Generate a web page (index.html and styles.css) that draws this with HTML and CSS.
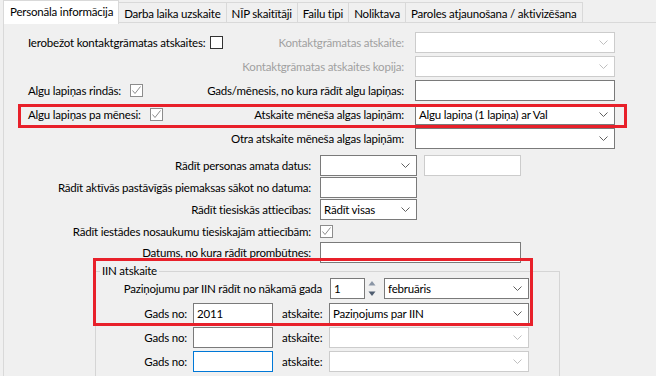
FILE: index.html
```html
<!DOCTYPE html>
<html>
<head>
    <meta charset="utf-8" />
    <title>Personāla informācija</title>
    <link rel="stylesheet" href="styles.css">
</head>
<body>
<div class="tabs">
    <div class="tab active">Personāla informācija</div>
    <div class="tab">Darba laika uzskaite</div>
    <div class="tab">NĪP skaitītāji</div>
    <div class="tab">Failu tipi</div>
    <div class="tab">Noliktava</div>
    <div class="tab">Paroles atjaunošana / aktivizēšana</div>
</div>
<div class="panel">
    <div class="sec-top">
        <div class="frow">
            <span class="chkline">Ierobežot kontaktgrāmatas atskaites:<span class="cb cb-near"></span></span>
            <span class="lbl dis">Kontaktgrāmatas atskaite:</span>
            <span class="box combo dis w200"><span></span><svg class="chev" width="9" height="5" viewBox="0 0 9 5"><path d="M0.5 0.5 4.5 4.5 8.5 0.5"/></svg></span>
        </div>
        <div class="frow">
            <span class="lbl dis">Kontaktgrāmatas atskaites kopija:</span>
            <span class="box combo dis w200"><span></span><svg class="chev" width="9" height="5" viewBox="0 0 9 5"><path d="M0.5 0.5 4.5 4.5 8.5 0.5"/></svg></span>
        </div>
        <div class="frow">
            <span class="chkline">Algu lapiņas rindās:<span class="cb on"><svg width="11" height="11" viewBox="0 0 11 11"><path d="M1.5 5.5 4 8.5 9.5 1.5"/></svg></span></span>
            <span class="lbl">Gads/mēnesis, no kura rādīt algu lapiņas:</span>
            <span class="box w200"></span>
        </div>
        <div class="frow">
            <span class="chkline">Algu lapiņas pa mēnesi:<span class="cb on"><svg width="11" height="11" viewBox="0 0 11 11"><path d="M1.5 5.5 4 8.5 9.5 1.5"/></svg></span></span>
            <span class="lbl">Atskaite mēneša algas lapiņām:</span>
            <span class="box combo w200"><span>Algu lapiņa (1 lapiņa) ar Val</span><svg class="chev" width="9" height="5" viewBox="0 0 9 5"><path d="M0.5 0.5 4.5 4.5 8.5 0.5"/></svg></span>
        </div>
        <div class="frow">
            <span class="lbl">Otra atskaite mēneša algas lapiņām:</span>
            <span class="box combo w200"><span></span><svg class="chev" width="9" height="5" viewBox="0 0 9 5"><path d="M0.5 0.5 4.5 4.5 8.5 0.5"/></svg></span>
        </div>
    </div>

    <div class="sec-mid">
        <span class="mlbl">Rādīt personas amata datus:</span>
        <span class="pair">
            <span class="box combo w97"><span></span><svg class="chev" width="9" height="5" viewBox="0 0 9 5"><path d="M0.5 0.5 4.5 4.5 8.5 0.5"/></svg></span>
            <span class="box dis w97"></span>
        </span>
        <span class="mlbl">Rādīt aktīvās pastāvīgās piemaksas sākot no datuma:</span>
        <span class="box w97"></span>
        <span class="mlbl">Rādīt tiesiskās attiecības:</span>
        <span class="box combo w97"><span>Rādīt visas</span><svg class="chev" width="9" height="5" viewBox="0 0 9 5"><path d="M0.5 0.5 4.5 4.5 8.5 0.5"/></svg></span>
        <span class="mlbl">Rādīt iestādes nosaukumu tiesiskajām attiecībām:</span>
        <span class="cb on"><svg width="11" height="11" viewBox="0 0 11 11"><path d="M1.5 5.5 4 8.5 9.5 1.5"/></svg></span>
        <span class="mlbl">Datums, no kura rādīt prombūtnes:</span>
        <span class="box w201"></span>
    </div>

    <fieldset class="group">
        <legend>IIN atskaite</legend>
        <div class="grow first">
            <span class="glbl wide">Paziņojumu par IIN rādīt no nākamā gada</span>
            <span class="box w35">1</span>
            <svg class="spin" width="8" height="21" viewBox="0 0 8 21"><path class="up" d="M4 3 7.5 7.5H0.5Z"/><path class="down" d="M0.5 13.5H7.5L4 18Z"/></svg>
            <span class="box combo w145"><span>februāris</span><svg class="chev" width="9" height="5" viewBox="0 0 9 5"><path d="M0.5 0.5 4.5 4.5 8.5 0.5"/></svg></span>
        </div>
        <div class="grow">
            <span class="glbl">Gads no:</span>
            <span class="box w80">2011</span>
            <span class="alb">atskaite:</span>
            <span class="box combo w200"><span>Paziņojums par IIN</span><svg class="chev" width="9" height="5" viewBox="0 0 9 5"><path d="M0.5 0.5 4.5 4.5 8.5 0.5"/></svg></span>
        </div>
        <div class="grow">
            <span class="glbl">Gads no:</span>
            <span class="box w80"></span>
            <span class="alb">atskaite:</span>
            <span class="box combo dis w200"><span></span><svg class="chev" width="9" height="5" viewBox="0 0 9 5"><path d="M0.5 0.5 4.5 4.5 8.5 0.5"/></svg></span>
        </div>
        <div class="grow">
            <span class="glbl">Gads no:</span>
            <span class="box focus w80"></span>
            <span class="alb">atskaite:</span>
            <span class="box combo dis w200"><span></span><svg class="chev" width="9" height="5" viewBox="0 0 9 5"><path d="M0.5 0.5 4.5 4.5 8.5 0.5"/></svg></span>
        </div>
    </fieldset>
</div>

<div class="mark mark-month"></div>
<div class="mark mark-iin"></div>
</body>
</html>
```

FILE: styles.css
```css
body {
	margin: 0;
	width: 656px;
	height: 376px;
	overflow: hidden;
	position: relative;
	background-color: #f0f0f0;
	color: #000;
	font-family: Lato, "Liberation Sans", sans-serif;
	font-size: 11.5px;
	letter-spacing: -0.2px;
}
.tabs {
	display: flex;
	align-items: flex-end;
	height: 22px;
	padding-left: 3px;
}
.tab {
	height: 20px;
	box-sizing: border-box;
	padding: 3px 5px 0 5px;
	line-height: 16px;
	border-top: 1px solid #d9d9d9;
	border-right: 1px solid #d9d9d9;
	white-space: nowrap;
}
.tab.active {
	position: relative;
	z-index: 1;
	height: 24px;
	margin-bottom: -2px;
	padding: 2px 5px 0 6px;
	line-height: 18px;
	border-left: 1px solid #d9d9d9;
	background-color: #fff;
}
.panel {
	height: 353px;
	margin-left: 3px;
	padding-left: 24px;
	border-top: 1px solid #d9d9d9;
	border-left: 1px solid #d9d9d9;
}

/* controls */
.box {
	display: flex;
	align-items: center;
	height: 21px;
	box-sizing: border-box;
	padding-left: 3px;
	border: 1px solid #7a7a7a;
	background-color: #fff;
	white-space: nowrap;
}
.box.dis {
	border-color: #cccccc;
}
.box.focus {
	border-color: #0078d7;
}
.combo {
	justify-content: space-between;
	padding-right: 6px;
}
.chev {
	flex: none;
	fill: none;
	stroke: #606060;
}
.dis .chev {
	stroke: #bfbfbf;
}
.w35 { width: 35px; }
.w80 { width: 80px; }
.w97 { width: 97px; }
.w145 { width: 145px; }
.w200 { width: 200px; }
.w201 { width: 201px; }

.cb {
	display: inline-flex;
	align-items: center;
	justify-content: center;
	width: 13px;
	height: 13px;
	box-sizing: border-box;
	margin-left: 9px;
	border: 1px solid #333;
	background-color: #fff;
	vertical-align: middle;
}
.cb.cb-near {
	margin-left: 5px;
}
.cb.on {
	border-color: #8c8c8c;
}
.cb svg {
	fill: none;
	stroke: #8c8c8c;
}

/* upper block */
.sec-top {
	display: flex;
	flex-direction: column;
	gap: 3px;
	width: 587px;
	padding-top: 9px;
}
.frow {
	display: flex;
	align-items: center;
	height: 21px;
}
.chkline {
	display: flex;
	align-items: center;
	white-space: nowrap;
}
.lbl {
	flex: 1;
	margin-right: 11px;
	text-align: right;
	white-space: nowrap;
}
.dis {
	color: #a0a0a0;
}

/* middle block */
.sec-mid {
	display: grid;
	grid-template-columns: 283px auto;
	grid-template-rows: 21px 21px 21px 20px 21px;
	column-gap: 9px;
	row-gap: 1px;
	align-items: center;
	justify-items: start;
	margin-top: 6px;
}
.mlbl {
	justify-self: end;
	white-space: nowrap;
}
.pair {
	display: flex;
	gap: 7px;
}
.sec-mid .cb {
	margin-left: 0;
}

/* IIN group */
.group {
	width: 465px;
	height: 111px;
	box-sizing: border-box;
	margin: 2px 0 0 67px;
	padding: 1px 0 0 0;
	border: 1px solid #d5d5d5;
	border-bottom: none;
}
.group legend {
	margin-left: 4px;
	padding: 0 2px;
	line-height: 12px;
}
.grow {
	display: flex;
	align-items: center;
	height: 21px;
	margin-bottom: 3px;
}
.grow.first {
	margin-bottom: 4px;
}
.glbl {
	width: 91px;
	margin-right: 6px;
	text-align: right;
	white-space: nowrap;
}
.glbl.wide {
	width: 226px;
	margin-right: 8px;
}
.alb {
	width: 41px;
	margin: 0 6px 0 9px;
	white-space: nowrap;
}
.spin {
	flex: none;
	margin: 0 8px 0 3px;
}
.spin .up {
	fill: #8a95a5;
}
.spin .down {
	fill: #4f5d70;
}

/* red annotation frames */
.mark {
	position: absolute;
	box-sizing: border-box;
	border: 3px solid #e8202a;
}
.mark-month {
	left: 18px;
	top: 104px;
	width: 609px;
	height: 24px;
}
.mark-iin {
	left: 93px;
	top: 258px;
	width: 440px;
	height: 68px;
}
```
